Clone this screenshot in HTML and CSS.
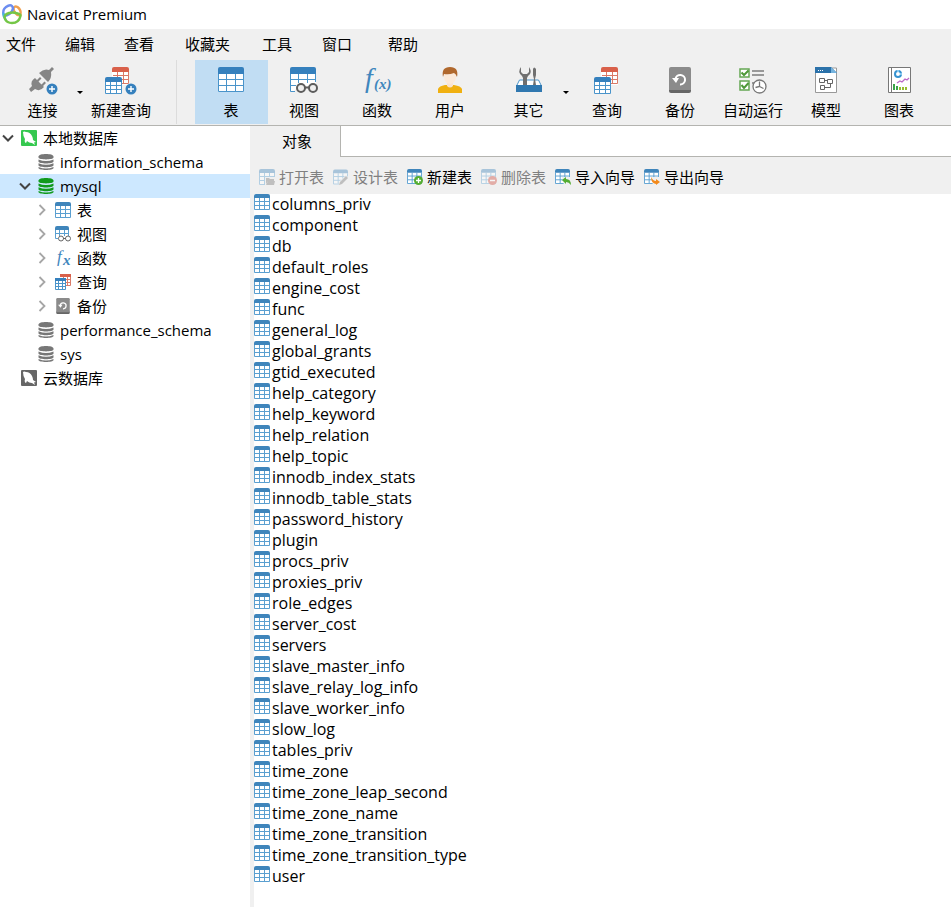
FILE: index.html
```html
<!DOCTYPE html>
<html lang="zh-CN">
<head>
    <meta charset="UTF-8">
    <meta name="viewport" content="width=device-width, initial-scale=1.0">
    <title>Navicat Premium</title>
    <link rel="stylesheet" href="styles.css">
</head>
<body>
    <!-- shared icons -->
    <svg class="sprite" aria-hidden="true">
        <symbol id="i-table" viewBox="0 0 16 16">
            <path fill="#fff" d="M0 1h16v15H0z"/>
            <path fill="none" stroke="#5a9fd0" d="M.5 4v11.500h15V4M5.500 4v11M10.500 4v11M1 7.500h14M1 11.500h14"/>
            <path fill="#3f85bb" d="M0 4V2q0-2 2-2h12q2 0 2 2v2z"/>
        </symbol>
        <symbol id="i-table-lg" viewBox="0 0 26 26">
            <path fill="#fff" d="M0 3h26v22H0z"/>
            <path fill="none" stroke="#4a94ca" d="M.5 6v18.500h25V6M8.500 7v17M17.500 7v17M1 12.500h24M1 18.500h24"/>
            <path fill="#3580bd" d="M0 7V2q0-2 2-2h22q2 0 2 2v5z"/>
        </symbol>
        <symbol id="i-view" viewBox="0 0 16 16">
            <path fill="#fff" d="M0 1h14v12H0z"/>
            <path fill="none" stroke="#5a9fd0" d="M.5 4v8.500H3M4.500 4v6M9.500 4v6M13.500 4v6M1 7.500h12"/>
            <path fill="#3f85bb" d="M0 4V2q0-2 2-2h10q2 0 2 2v2z"/>
            <circle cx="6" cy="12.500" r="2.500" fill="#fff" stroke="#666"/>
            <circle cx="13" cy="12.500" r="2.500" fill="#fff" stroke="#666"/>
            <path stroke="#666" d="M8 12.500h3"/>
        </symbol>
        <symbol id="i-query" viewBox="0 0 26 28">
            <path fill="#fff" d="M7 3h17v15H7z"/>
            <path fill="none" stroke="#da7a67" d="M23.500 5v11.500H8M12.500 5v12M18.500 5v12M8 8.500h15M8 12.500h15"/>
            <path fill="#d9604a" d="M7 5V2q0-2 2-2h13q2 0 2 2v3z"/>
            <path fill="#fff" d="M0 12h17v15H0z"/>
            <path fill="none" stroke="#4a94ca" d="M.5 14v12.500h16V14M5.500 15v11M11.500 15v11M1 18.500h15M1 22.500h15"/>
            <path fill="#3580bd" d="M0 15v-3q0-2 2-2h13q2 0 2 2v3z"/>
        </symbol>
        <symbol id="i-plus" viewBox="0 0 12 12">
            <circle cx="6" cy="6" r="5.500" fill="#3580bd"/>
            <path stroke="#fff" stroke-width="1.400" d="M6 3v6M3 6h6"/>
        </symbol>
        <symbol id="i-backup" viewBox="0 0 22 26">
            <path fill="#666" d="M0 22h22v2q0 2-2 2H2q-2 0-2-2z"/>
            <path fill="#8b8b8b" d="M0 23V2q0-2 2-2h18q2 0 2 2v21z"/>
            <path fill="none" stroke="#fff" stroke-width="2" d="M6.500 12a4.800 4.800 0 1 1 4.500 5.500"/>
            <path fill="#fff" d="M3 11h7l-3 5z"/>
        </symbol>
        <symbol id="i-db" viewBox="0 0 15 16">
            <path fill="currentColor" d="M0 2.500C0-.8 15-.8 15 2.500v1C15 6 0 6 0 3.500z"/>
            <path fill="currentColor" d="M0 5.500q7.500 3 15 0v2c0 2.600-15 2.600-15 0zM0 9.300q7.500 3 15 0v2c0 2.600-15 2.600-15 0zM0 13q7.500 3 15 0v1c0 2.600-15 2.600-15 0z"/>
        </symbol>
        <symbol id="i-mysql" viewBox="0 0 16 16">
            <rect fill="currentColor" width="16" height="16" rx="1"/>
            <path fill="#fff" d="M2 2q1-1 3 0 4 0 6 4 1 2 1 4l3 2-2 .5 1 2.500-3-2q-3 0-5-2l-1 2q-2-1-1-4-2-3-2-7z"/>
        </symbol>
        <symbol id="i-down" viewBox="0 0 12 12">
            <path fill="none" stroke="#444" stroke-width="2" d="M1 3.500l5 5 5-5"/>
        </symbol>
        <symbol id="i-right" viewBox="0 0 12 12">
            <path fill="none" stroke="#a6a6a6" stroke-width="1.800" d="M3.500 1l5 5-5 5"/>
        </symbol>
    </svg>

    <header class="title-bar">
        <svg class="logo" viewBox="0 0 20 20" aria-hidden="true">
            <g fill="none" stroke-width="2.400" stroke-linecap="round">
                <path stroke="#f0a050" d="M11.500 4.500q1-3 4-1.500 4 3 3 8-3 1-5-2-2-2-2-4.500z"/>
                <path stroke="#6c8df0" d="M1.800 11Q0 6 4 3t6-1q2 2 0 5-2 4-8 5z"/>
                <path stroke="#45b7dc" d="M1.500 10q0 3 2 5.500"/>
                <path stroke="#74c646" d="M3 15q-2-4 4-6 4-1 7 0 5 1 4.500 3-1.500 7-8.500 7-5 0-7-4z"/>
            </g>
        </svg>
        <h1>Navicat Premium</h1>
    </header>

    <nav class="menu-bar">
        <button>文件</button>
        <button>编辑</button>
        <button>查看</button>
        <button>收藏夹</button>
        <button>工具</button>
        <button>窗口</button>
        <button>帮助</button>
    </nav>

    <div class="toolbar">
        <button class="tool has-menu">
            <svg width="30" height="28" viewBox="0 0 30 28">
                <g fill="#858585">
                    <path d="M11 6q5-5 10-3l3-3 2 2-3 3q1 6-3 10z"/>
                    <path d="M1 22l3-3q-2-5 3-8l2 2 3-3 1.500 1.500-3 3 3 3 3-3L18 16l-3 3 1 1q-4 5-9 2l-4 3z"/>
                </g>
                <use href="#i-plus" x="18" y="16" width="12" height="12"/>
            </svg>
            连接
        </button>
        <button class="tool">
            <svg width="32" height="28" viewBox="0 0 32 28">
                <use href="#i-query" x="0" y="0" width="26" height="28"/>
                <use href="#i-plus" x="20" y="16" width="12" height="12"/>
            </svg>
            新建查询
        </button>
        <span class="divider"></span>
        <button class="tool active">
            <svg width="26" height="28"><use href="#i-table-lg" width="26" height="26"/></svg>
            表
        </button>
        <button class="tool">
            <svg width="28" height="28" viewBox="0 0 28 28">
                <path fill="#fff" d="M0 3h26v16H9l-5 5H0z"/>
                <path fill="none" stroke="#4a94ca" d="M.5 6v18.500H5M8.500 7v9M17.500 7v9M25.500 6v9M1 12.500h24M1 18.500h5"/>
                <path fill="#3580bd" d="M0 7V2q0-2 2-2h22q2 0 2 2v5z"/>
                <g fill="#f0f0f0" stroke="#5c5c5c" stroke-width="2">
                    <circle cx="11" cy="21" r="4"/>
                    <circle cx="23" cy="21" r="4"/>
                    <path d="M15 20.500h4"/>
                </g>
            </svg>
            视图
        </button>
        <button class="tool">
            <svg width="30" height="28" viewBox="0 0 30 28">
                <text class="fx" x="3" y="20" font-size="28">f</text>
                <text class="fx strong" x="12" y="22" font-size="15">(x)</text>
            </svg>
            函数
        </button>
        <button class="tool">
            <svg width="26" height="28" viewBox="0 0 26 28">
                <path fill="#f0b010" d="M1 26v-4q1-3 7-4h9q7 1 8 4v4z"/>
                <path fill="#f9e3cf" d="M10 14h6v5q-3 3-6 0z"/>
                <ellipse cx="13" cy="10" rx="6" ry="7" fill="#fbe9d9"/>
                <path fill="#b0682d" d="M6 10Q4 0 13 0t7 10q-1-3-3-4-5 2-10 1z"/>
            </svg>
            用户
        </button>
        <button class="tool has-menu">
            <svg width="26" height="28" viewBox="0 0 26 28">
                <path fill="#fff" stroke="#4a94ca" d="M.5 19l3-6h19l3 6z"/>
                <path fill="#707070" d="M5 0v5l2 2h4l2-2V0q4 6-1 9l-1 2v7H7v-7L6 9Q1 5 5 0zM17 2q1-3 3 0v6l-1 4 1 6h-3l1-6-1-4z"/>
                <path fill="#3078b0" d="M0 18h26v7H0z"/>
            </svg>
            其它
        </button>
        <button class="tool">
            <svg width="26" height="28"><use href="#i-query" width="26" height="28"/></svg>
            查询
        </button>
        <button class="tool">
            <svg width="22" height="28"><use href="#i-backup" width="22" height="26"/></svg>
            备份
        </button>
        <button class="tool">
            <svg width="28" height="28" viewBox="0 0 28 28">
                <path fill="#fff" stroke="#64a653" stroke-width="1.500" d="M1 2h9v8H1zM1 14h9v9H1z"/>
                <path fill="none" stroke="#4d9838" stroke-width="2" d="M2.500 5.500L5 8l4.500-4.500M2.500 18L5 21l4.500-5"/>
                <path stroke="#999" stroke-width="2" d="M13 4h12M13 8h12M13 16h3"/>
                <circle cx="20.500" cy="19.500" r="6.500" fill="#fff" stroke="#777" stroke-width="1.300"/>
                <path fill="none" stroke="#777" stroke-width="1.300" d="M20.500 14.500v5l-4 1M20.500 19.500l4 2"/>
            </svg>
            自动运行
        </button>
        <button class="tool">
            <svg width="22" height="28" viewBox="0 0 22 28">
                <path fill="#fff" stroke="#999" d="M.5 1h21v24.500H.5z"/>
                <path fill="#2c72aa" d="M0 0h16l6 6H0z"/>
                <path fill="#75b3de" d="M16 0l6 6h-6z"/>
                <path stroke="#fff" stroke-dasharray="1 1" d="M3 3.500h5"/>
                <path fill="none" stroke="#666" d="M4.500 11.500h5v4h-5zM12.500 12.500h5v4h-5zM5.500 18.500h4v4h-4zM9.500 13.500h3M15.500 16.500v4h-6"/>
            </svg>
            模型
        </button>
        <button class="tool">
            <svg width="23" height="28" viewBox="0 0 23 28">
                <path fill="#fff" stroke="#777" d="M.5.500h22v25H.5zM3.500 1v24"/>
                <circle cx="10" cy="7" r="3" fill="none" stroke="#3692d0" stroke-width="2"/>
                <path stroke="#86c8ef" stroke-width="2" d="M10 3v2M12 7h2"/>
                <path fill="none" stroke="#bc68c8" stroke-width="1.300" d="M9 16l3-2 2 1 3-3 2 1 2-2"/>
                <path stroke="#3aa34a" stroke-width="2" d="M6 17v6M9 19v4"/>
                <path stroke="#96bd30" stroke-width="2" d="M12 20v3M15 20v3M18 20v3"/>
            </svg>
            图表
        </button>
    </div>

    <div class="workspace">
        <aside class="sidebar">
            <ul class="tree">
                <li class="node level-1">
                    <button class="toggle" aria-label="折叠"><svg><use href="#i-down"/></svg></button>
                    <svg class="icon server on"><use href="#i-mysql"/></svg>本地数据库
                </li>
                <li class="node level-2">
                    <span class="toggle"></span>
                    <svg class="icon"><use href="#i-db"/></svg>information_schema
                </li>
                <li class="node level-2 selected">
                    <button class="toggle" aria-label="折叠"><svg><use href="#i-down"/></svg></button>
                    <svg class="icon open"><use href="#i-db"/></svg>mysql
                </li>
                <li class="node level-3">
                    <button class="toggle" aria-label="展开"><svg><use href="#i-right"/></svg></button>
                    <svg class="icon"><use href="#i-table"/></svg>表
                </li>
                <li class="node level-3">
                    <button class="toggle" aria-label="展开"><svg><use href="#i-right"/></svg></button>
                    <svg class="icon"><use href="#i-view"/></svg>视图
                </li>
                <li class="node level-3">
                    <button class="toggle" aria-label="展开"><svg><use href="#i-right"/></svg></button>
                    <svg class="icon" viewBox="0 0 16 16">
                        <text class="fx" x="2" y="12" font-size="17">f</text>
                        <text class="fx strong" x="8" y="15" font-size="15">x</text>
                    </svg>函数
                </li>
                <li class="node level-3">
                    <button class="toggle" aria-label="展开"><svg><use href="#i-right"/></svg></button>
                    <svg class="icon" viewBox="0 0 16 16">
                        <path fill="#fff" d="M5 1h11v10H5z"/>
                        <path fill="none" stroke="#da7a67" d="M15.500 2v9.500H11M8.500 3v4M12.500 3v8M6 5.500h9M11 8.500h4"/>
                        <path fill="#d9604a" d="M5 0h11v3H5z"/>
                        <path fill="#fff" d="M0 4h11v12H0z"/>
                        <path fill="none" stroke="#4a94ca" d="M.5 6v9.500h10V6M3.500 7v8M7.500 7v8M1 9.500h9M1 12.500h9"/>
                        <path fill="#3580bd" d="M0 4h11v3H0z"/>
                    </svg>查询
                </li>
                <li class="node level-3">
                    <button class="toggle" aria-label="展开"><svg><use href="#i-right"/></svg></button>
                    <svg class="icon"><use href="#i-backup"/></svg>备份
                </li>
                <li class="node level-2">
                    <span class="toggle"></span>
                    <svg class="icon"><use href="#i-db"/></svg>performance_schema
                </li>
                <li class="node level-2">
                    <span class="toggle"></span>
                    <svg class="icon"><use href="#i-db"/></svg>sys
                </li>
                <li class="node level-1">
                    <span class="toggle"></span>
                    <svg class="icon server"><use href="#i-mysql"/></svg>云数据库
                </li>
            </ul>
        </aside>

        <main class="content">
            <div class="tabs">
                <button class="tab">对象</button>
                <div class="tabs-rest"></div>
            </div>

            <div class="actions">
                <button disabled>
                    <svg class="icon" viewBox="0 0 16 16">
                        <use href="#i-table" width="16" height="16"/>
                        <path fill="#f0f0f0" d="M6 8h10v8H6z"/>
                        <path fill="#777" d="M7 9h3l1 1h4v2H9l-2 3zM9 12h7l-1 4H7z"/>
                    </svg>打开表
                </button>
                <button disabled>
                    <svg class="icon" viewBox="0 0 16 16">
                        <use href="#i-table" width="15" height="16"/>
                        <path fill="#f0f0f0" d="M6 13l7-7 3 3v7H6z"/>
                        <path fill="#777" d="M7 13l6-6 2 2-6 6-3 1z"/>
                    </svg>设计表
                </button>
                <button>
                    <svg class="icon" viewBox="0 0 16 16">
                        <use href="#i-table" width="15" height="15"/>
                        <circle cx="11.500" cy="11.500" r="4.500" fill="#54ad32"/>
                        <path stroke="#fff" stroke-width="1.300" d="M11.500 9v5M9 11.500h5"/>
                    </svg>新建表
                </button>
                <button disabled>
                    <svg class="icon" viewBox="0 0 16 16">
                        <use href="#i-table" width="15" height="15"/>
                        <circle cx="11.500" cy="11.500" r="4.500" fill="#d04a3c"/>
                        <path stroke="#fff" stroke-width="1.500" d="M9 11.500h5"/>
                    </svg>删除表
                </button>
                <button>
                    <svg class="icon" viewBox="0 0 16 16">
                        <use href="#i-table" width="15" height="15"/>
                        <path fill="#f0f0f0" d="M7 8h9v8H9z"/>
                        <path fill="#54ad32" d="M7 11l4-3v2q5 0 5 6-2-3-5-3v2z"/>
                    </svg>导入向导
                </button>
                <button>
                    <svg class="icon" viewBox="0 0 16 16">
                        <use href="#i-table" width="15" height="15"/>
                        <path fill="#f0f0f0" d="M7 8h9v8H9z"/>
                        <path fill="#f28a1c" d="M16 13l-4-3v2q-3 0-5-4 0 6 5 7v1z"/>
                    </svg>导出向导
                </button>
            </div>

            <ul class="objects">
                <li><svg class="icon"><use href="#i-table"/></svg>columns_priv</li>
                <li><svg class="icon"><use href="#i-table"/></svg>component</li>
                <li><svg class="icon"><use href="#i-table"/></svg>db</li>
                <li><svg class="icon"><use href="#i-table"/></svg>default_roles</li>
                <li><svg class="icon"><use href="#i-table"/></svg>engine_cost</li>
                <li><svg class="icon"><use href="#i-table"/></svg>func</li>
                <li><svg class="icon"><use href="#i-table"/></svg>general_log</li>
                <li><svg class="icon"><use href="#i-table"/></svg>global_grants</li>
                <li><svg class="icon"><use href="#i-table"/></svg>gtid_executed</li>
                <li><svg class="icon"><use href="#i-table"/></svg>help_category</li>
                <li><svg class="icon"><use href="#i-table"/></svg>help_keyword</li>
                <li><svg class="icon"><use href="#i-table"/></svg>help_relation</li>
                <li><svg class="icon"><use href="#i-table"/></svg>help_topic</li>
                <li><svg class="icon"><use href="#i-table"/></svg>innodb_index_stats</li>
                <li><svg class="icon"><use href="#i-table"/></svg>innodb_table_stats</li>
                <li><svg class="icon"><use href="#i-table"/></svg>password_history</li>
                <li><svg class="icon"><use href="#i-table"/></svg>plugin</li>
                <li><svg class="icon"><use href="#i-table"/></svg>procs_priv</li>
                <li><svg class="icon"><use href="#i-table"/></svg>proxies_priv</li>
                <li><svg class="icon"><use href="#i-table"/></svg>role_edges</li>
                <li><svg class="icon"><use href="#i-table"/></svg>server_cost</li>
                <li><svg class="icon"><use href="#i-table"/></svg>servers</li>
                <li><svg class="icon"><use href="#i-table"/></svg>slave_master_info</li>
                <li><svg class="icon"><use href="#i-table"/></svg>slave_relay_log_info</li>
                <li><svg class="icon"><use href="#i-table"/></svg>slave_worker_info</li>
                <li><svg class="icon"><use href="#i-table"/></svg>slow_log</li>
                <li><svg class="icon"><use href="#i-table"/></svg>tables_priv</li>
                <li><svg class="icon"><use href="#i-table"/></svg>time_zone</li>
                <li><svg class="icon"><use href="#i-table"/></svg>time_zone_leap_second</li>
                <li><svg class="icon"><use href="#i-table"/></svg>time_zone_name</li>
                <li><svg class="icon"><use href="#i-table"/></svg>time_zone_transition</li>
                <li><svg class="icon"><use href="#i-table"/></svg>time_zone_transition_type</li>
                <li><svg class="icon"><use href="#i-table"/></svg>user</li>
            </ul>
        </main>
    </div>
</body>
</html>
```

FILE: styles.css
```css
* {
    box-sizing: border-box;
}
body {
    margin: 0;
    min-height: 100vh;
    display: flex;
    flex-direction: column;
    background: #fff;
    color: #000;
    font: 15px/20px "Open Sans", "Noto Sans CJK SC", sans-serif;
}
button {
    padding: 0;
    border: 0;
    background: none;
    color: inherit;
    font: inherit;
    white-space: nowrap;
}
ul {
    margin: 0;
    padding: 0;
    list-style: none;
}
svg {
    overflow: visible;
}
.sprite {
    position: absolute;
    width: 0;
    height: 0;
}
.icon {
    width: 16px;
    height: 16px;
    flex: none;
}
.fx {
    fill: #3f86bd;
    font-family: "Liberation Serif", serif;
    font-style: italic;
}
.fx.strong {
    font-weight: bold;
}

/* title and menu */
.title-bar {
    display: flex;
    align-items: center;
    gap: 5px;
    height: 29px;
    padding: 0 0 2px 2px;
}
.title-bar h1 {
    margin: 0;
    font-size: 15px;
    font-weight: 400;
}
.logo {
    width: 20px;
    height: 20px;
}
.menu-bar {
    display: grid;
    grid-template-columns: 59px 59px 61px 77px 60px 66px auto;
    justify-content: start;
    height: 31px;
    padding: 0 0 2px 6px;
    background: #f0f0f0;
}
.menu-bar button {
    text-align: left;
}

/* main toolbar */
.toolbar {
    display: flex;
    height: 66px;
    padding: 0 0 1px 1px;
    background: #f0f0f0;
    border-bottom: 1px solid #b4b4b0;
}
.tool {
    position: relative;
    display: flex;
    flex-direction: column;
    align-items: center;
    gap: 5px;
    width: 73px;
    padding: 7px 1px 0 0;
}
.tool.active {
    background: #c1ddf3;
}
.tool.has-menu {
    width: 84px;
}
.tool.has-menu::after {
    content: "";
    position: absolute;
    right: 2px;
    top: 31px;
    border: 3px solid transparent;
    border-top-color: #000;
    border-bottom: 0;
}
.divider {
    width: 1px;
    margin: 0 18px;
    background: #dcdcdc;
}

/* connection tree */
.workspace {
    display: flex;
    flex: 1;
}
.sidebar {
    flex: none;
    width: 250px;
}
.node {
    display: flex;
    align-items: center;
    height: 24px;
}
.level-2 {
    padding-left: 17px;
}
.level-3 {
    padding-left: 34px;
}
.node.selected {
    background: #cde8ff;
}
.toggle {
    display: flex;
    width: 21px;
    padding-left: 2px;
}
.toggle svg {
    width: 12px;
    height: 12px;
}
.node .icon {
    margin-right: 6px;
    color: #777;
}
.node .icon.open {
    color: #109a1e;
}
.node .icon.server {
    color: #666;
}
.node .icon.server.on {
    color: #35c84f;
}

/* object pane */
.content {
    flex: 1;
    border-left: 4px solid #f0f0f0;
}
.tabs {
    display: flex;
    height: 31px;
    background: #f0f0f0;
}
.tab {
    width: 86px;
    padding-bottom: 2px;
}
.tabs-rest {
    flex: 1;
    background: #fff;
    border: solid #b4b4b0;
    border-width: 0 0 1px 1px;
}
.actions {
    display: flex;
    align-items: center;
    gap: 9px;
    height: 37px;
    padding: 2px 0 0 5px;
    background: #f0f0f0;
}
.actions button {
    display: flex;
    align-items: center;
    gap: 4px;
}
.actions button:disabled {
    color: #808080;
}
.actions button:disabled .icon {
    opacity: 0.4;
}
.objects li {
    display: flex;
    align-items: flex-start;
    gap: 2px;
    height: 21px;
    font-size: 16px;
}
```
